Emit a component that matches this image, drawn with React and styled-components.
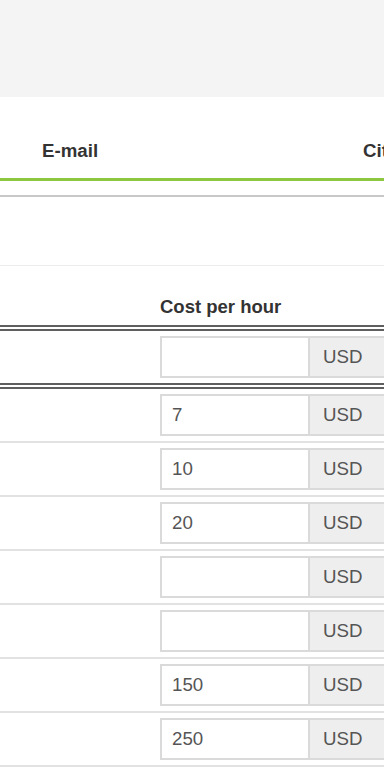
import React from 'react'
import styled, { createGlobalStyle } from 'styled-components'

const GlobalStyle = createGlobalStyle`
  html, body {
    margin: 0;
    padding: 0;
    background: #fff;
    overflow: hidden;
  }
  body {
    font-family: "Liberation Sans", Arial, sans-serif;
    color: #333;
  }
`

const TopBar = styled.div`
  height: 97px;
  background: #f4f4f4;
`

const Tabs = styled.div`
  height: 84px;
  display: flex;
  align-items: flex-end;
  padding-bottom: 16px;
  box-sizing: border-box;
  border-bottom: 3px solid #8dc63f;
  white-space: nowrap;
  overflow: hidden;
`

const Tab = styled.div`
  flex: none;
  font-size: 18.7px;
  font-weight: bold;
  line-height: 22px;
  color: #333;
  margin-left: ${p => p.left}px;
  width: ${p => p.width}px;
`

const Panel = styled.div`
  margin-top: 14px;
  border-top: 2px solid #c8c8c8;
`

const Spacer = styled.div`
  height: 68px;
  border-bottom: 1px solid #ececec;
`

const HeadRow = styled.div`
  display: flex;
  height: 65px;
  align-items: flex-end;
  padding-bottom: 7px;
  box-sizing: border-box;
  border-bottom: 6px double #5e5e5e;
`

const LabelCell = styled.div`
  width: 160px;
  flex: none;
`

const HeadCell = styled.div`
  font-size: 18.5px;
  font-weight: bold;
  line-height: 22px;
  color: #333;
  white-space: nowrap;
`

const Row = styled.div`
  display: flex;
  padding: 5px 0;
  border-bottom: ${p => (p.double ? '6px double #5e5e5e' : '2px solid #e2e2e2')};
`

const InputGroup = styled.div`
  display: flex;
  flex: none;
  height: 42px;
`

const Field = styled.input`
  width: 148px;
  height: 42px;
  box-sizing: border-box;
  border: 2px solid #dadada;
  border-right: none;
  padding: 0 10px;
  font-family: "Liberation Sans", Arial, sans-serif;
  font-size: 18.7px;
  color: #555;
  background: #fff;
  outline: none;
`

const Addon = styled.div`
  width: 90px;
  height: 42px;
  box-sizing: border-box;
  border: 2px solid #dadada;
  background: #eeeeee;
  display: flex;
  align-items: center;
  padding-left: 13px;
  font-size: 18.7px;
  color: #555;
`

const costs = ['', '7', '10', '20', '', '', '150', '250']

export default function App() {
  return (
    <>
      <GlobalStyle />
      <TopBar />
      <Tabs>
        <Tab left={42} width={321}>E-mail</Tab>
        <Tab left={0} width={80}>City</Tab>
      </Tabs>
      <Panel>
        <Spacer />
        <HeadRow>
          <LabelCell />
          <HeadCell>Cost per hour</HeadCell>
        </HeadRow>
        {costs.map((c, i) => (
          <Row key={i} double={i === 0}>
            <LabelCell />
            <InputGroup>
              <Field defaultValue={c} />
              <Addon>USD</Addon>
            </InputGroup>
          </Row>
        ))}
      </Panel>
    </>
  )
}
